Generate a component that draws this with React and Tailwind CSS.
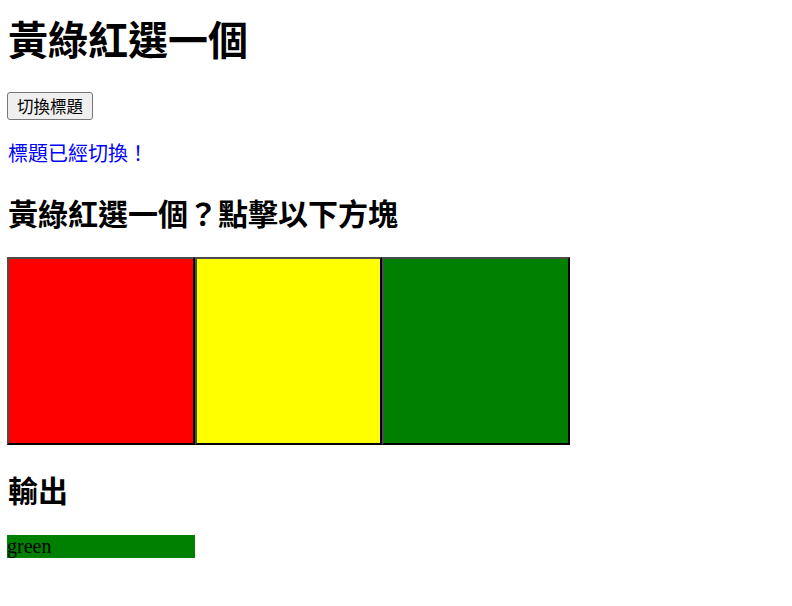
export default function App() {
  return (
    <div className="w-[792px] h-[606px] bg-white pl-[7px] pt-[18px] text-black font-['Liberation_Serif','Noto_Sans_CJK_TC',serif]">
      <h1 className="ml-px text-[40px] leading-[40px] font-bold font-['Noto_Sans_CJK_TC',sans-serif]">黃綠紅選一個</h1>
      <button className="mt-[34px] w-[86px] h-[28px] flex items-center justify-center border border-[#767676] bg-[#efefef] rounded-[3px] text-[16.5px] leading-[20px] font-['Noto_Sans_CJK_TC',sans-serif]">
        切換標題
      </button>
      <p className="mt-[23px] ml-px text-[20px] leading-[20px] text-[#0000ff] font-['Noto_Sans_CJK_TC',sans-serif]">標題已經切換！</p>
      <h2 className="mt-[34px] ml-px text-[30px] leading-[30px] font-bold font-['Noto_Sans_CJK_TC',sans-serif]">黃綠紅選一個？點擊以下方塊</h2>
      <div className="mt-[30px] flex">
        <div className="w-[187.67px] h-[188px] bg-[#ff0000] border-2 border-t-[#4d4d4d] border-l-[#4d4d4d] border-r-black border-b-black"></div>
        <div className="w-[187.67px] h-[188px] bg-[#ffff00] border-2 border-t-[#4d4d4d] border-l-[#4d4d4d] border-r-black border-b-black"></div>
        <div className="w-[187.67px] h-[188px] bg-[#008000] border-2 border-t-[#4d4d4d] border-l-[#4d4d4d] border-r-black border-b-black"></div>
      </div>
      <h2 className="mt-[29px] ml-px text-[30px] leading-[30px] font-bold font-['Noto_Sans_CJK_TC',sans-serif]">輸出</h2>
      <div className="mt-[31px] w-[188px] h-[23px] bg-[#008000] text-[20px] leading-[23px]">green</div>
    </div>
  );
}
